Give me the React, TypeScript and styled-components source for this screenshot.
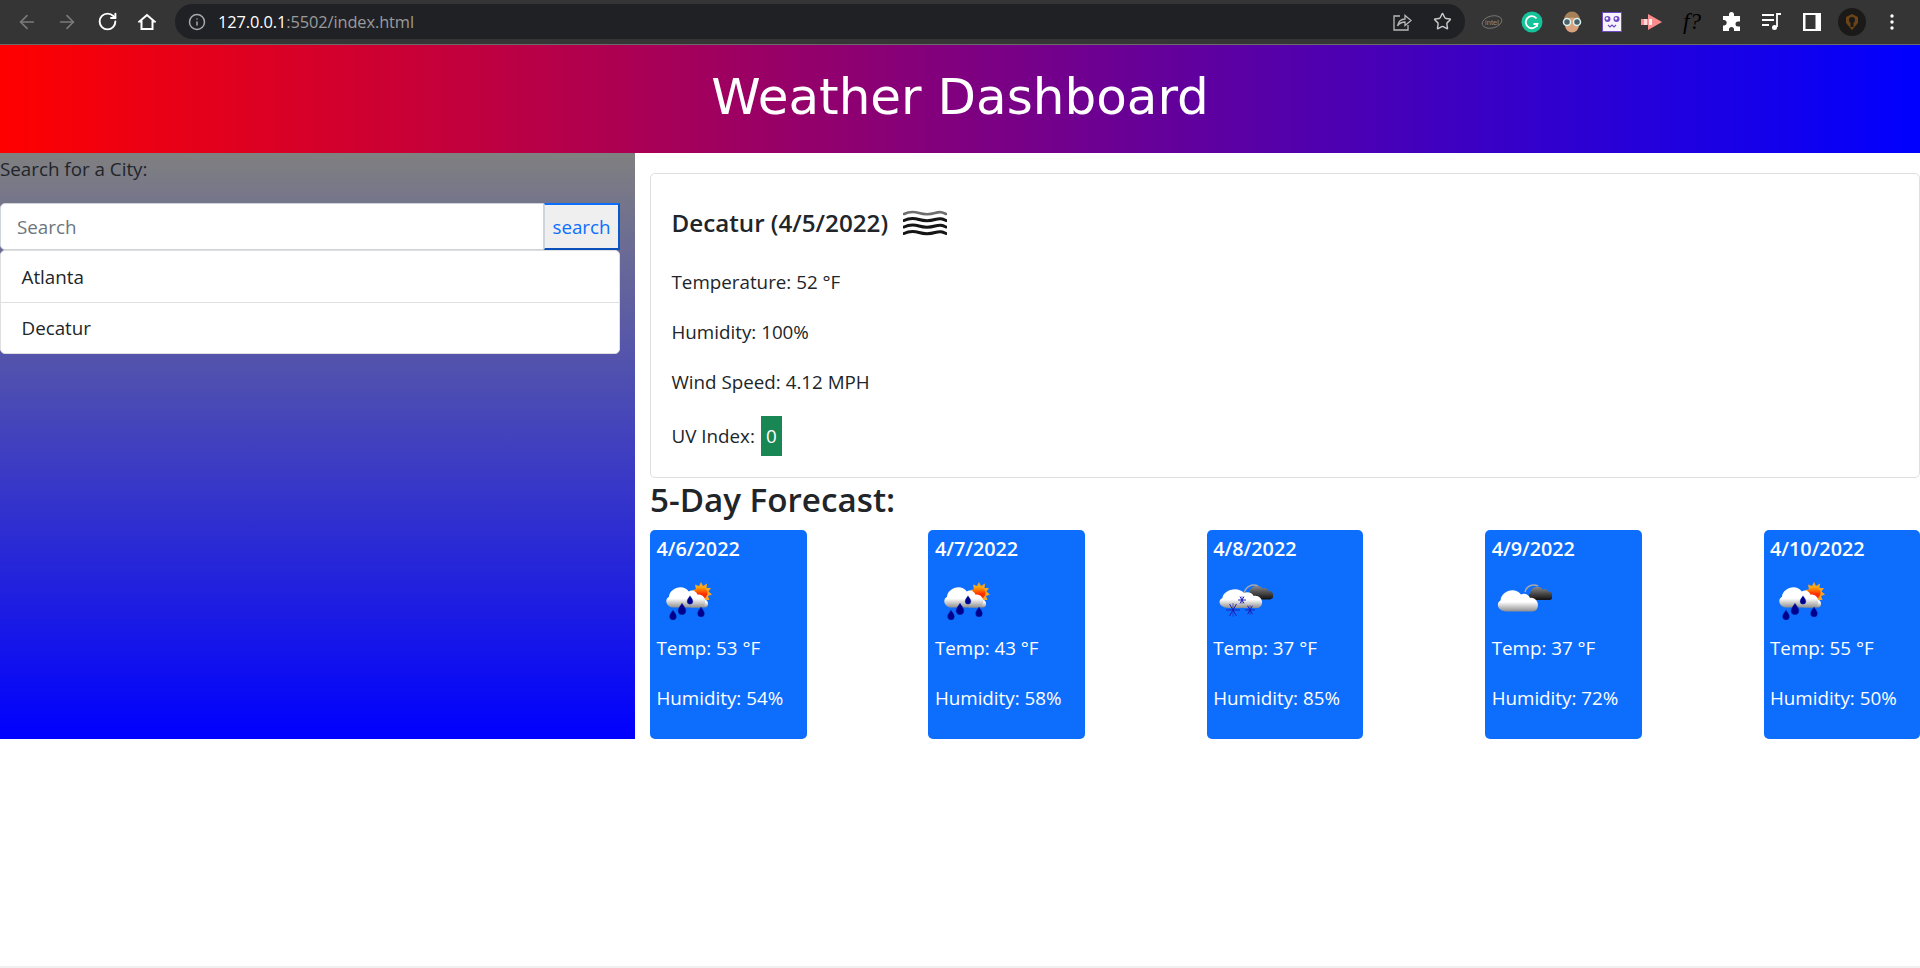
import React from 'react';
import styled, { createGlobalStyle } from 'styled-components';
import { ArrowLeft, ArrowRight, RotateCw, Info, Star } from 'lucide-react';

const GlobalStyle = createGlobalStyle`
  html, body {
    margin: 0;
    padding: 0;
    background: #fff;
  }
  * {
    box-sizing: border-box;
  }
`;

const Page = styled.div`
  height: 968px;
  display: flex;
  flex-direction: column;
  overflow: hidden;
  font-family: 'Open Sans', 'Noto Sans', sans-serif;
  font-size: 18.8px;
  color: #212529;
`;

const Toolbar = styled.div`
  height: 45px;
  flex: none;
  display: flex;
  align-items: center;
  padding: 0 0 1px 7px;
  background: #353535;
  border-bottom: 1px solid #6a6a6a;
`;

const Slot = styled.div`
  width: 40px;
  height: 32px;
  flex: none;
  display: flex;
  align-items: center;
  justify-content: center;
  color: ${(p: { $dim?: boolean }) => (p.$dim ? '#7b7b7b' : '#fff')};
`;

const Omnibox = styled.div`
  width: 1290px;
  height: 35px;
  margin: 0 7px 0 8px;
  padding: 0 3px 0 13px;
  display: flex;
  align-items: center;
  flex: none;
  border-radius: 18px;
  background: #202124;
  color: #a8a9ab;
`;

const Url = styled.div`
  flex: 1;
  margin-left: 12px;
  font-family: 'Open Sans', sans-serif;
  font-size: 16.4px;
  letter-spacing: -0.1px;
  color: #9a9b9e;

  b {
    font-weight: 400;
    color: #fff;
  }
`;

const FQuery = styled.span`
  font-family: 'Liberation Serif', serif;
  font-style: italic;
  font-size: 23px;
  color: #000;
`;

const Banner = styled.header`
  height: 108px;
  flex: none;
  padding-bottom: 5px;
  display: flex;
  align-items: center;
  justify-content: center;
  background: linear-gradient(to right, #f00, #00f);
`;

const BannerTitle = styled.h1`
  margin: 0;
  font-family: 'DejaVu Sans', Verdana, sans-serif;
  font-size: 50px;
  font-weight: 400;
  color: #fff;
`;

const Main = styled.main`
  display: flex;
  flex: none;
`;

const Sidebar = styled.aside`
  width: 635px;
  flex: none;
  background: linear-gradient(#808080, #00f);
`;

const SearchLabel = styled.p`
  margin: 1px 0 19px;
  line-height: 30px;
`;

const SearchGroup = styled.div`
  width: 620px;
  height: 47px;
  display: flex;
`;

const SearchInput = styled.div`
  flex: 1;
  padding-left: 16px;
  display: flex;
  align-items: center;
  background: #fff;
  color: #6c757d;
  border: 1px solid #ced4da;
  border-radius: 5px 0 0 5px;
`;

const SearchButton = styled.div`
  width: 76px;
  display: flex;
  align-items: center;
  justify-content: center;
  background: #efefef;
  color: #0d6efd;
  border: 2px solid #0d6efd;
  border-left: 1px solid #ced4da;
  border-bottom-color: #0b4fb8;
  border-right-color: #0b58ca;
`;

const CityList = styled.ul`
  width: 620px;
  margin: 0;
  padding: 0;
  list-style: none;
  background: #fff;
  border: 1px solid #dfdfdf;
  border-radius: 5px;
`;

const CityRow = styled.li`
  height: 51px;
  padding-left: 20.5px;
  display: flex;
  align-items: center;

  & + & {
    border-top: 1px solid #dfdfdf;
  }
`;

const Content = styled.section`
  flex: 1;
  padding: 20px 0 0 15px;
`;

const CurrentCard = styled.div`
  padding: 20px 20px 21px 20.5px;
  background: #fff;
  border: 1px solid #dfdfdf;
  border-radius: 5px;
`;

const CityTitle = styled.h5`
  height: 57px;
  margin: 0 0 16px;
  display: flex;
  align-items: center;
  gap: 15px;
  font-size: 24.2px;
  font-weight: 600;
`;

const Stat = styled.p`
  margin: 0 0 20px;
  line-height: 30px;
`;

const UvRow = styled.div`
  height: 40px;
  margin-top: -1px;
  display: flex;
  align-items: center;
  gap: 6px;
`;

const UvBadge = styled.span`
  width: 21px;
  height: 40px;
  display: flex;
  align-items: center;
  justify-content: center;
  background: #198754;
  color: #fff;
`;

const ForecastHeading = styled.h3`
  margin: 1px 0 9px;
  line-height: 42px;
  font-size: 33.2px;
  font-weight: 600;
`;

const ForecastRow = styled.div`
  display: flex;
  justify-content: space-between;
`;

const DayCard = styled.div`
  width: 156.5px;
  padding: 5px 6.5px 6px;
  border-radius: 5px;
  background: #0d6efd;
  color: #fff;
`;

const DayDate = styled.div`
  line-height: 28px;
  font-size: 19.8px;
  font-weight: 600;
`;

const DayIcon = styled.svg`
  display: block;
  width: 60px;
  height: 60px;
  margin: 2px 0 8px;
`;

const BottomEdge = styled.div`
  height: 2px;
  margin-top: auto;
  background: #f0f0f0;
`;

const CLOUD =
  'M10 20C3 20 0 13 5 10C5 3 17 -3 23 5C26 3 30 5 31 8C35 7 38 11 38 14C38 18 36 20 33 20Z';

const Defs = () => (
  <defs>
    <linearGradient id="cloudWhite" x1="0" y1="0" x2="0" y2="1">
      <stop offset="0.55" stopColor="#fff" />
      <stop offset="1" stopColor="#8f8f8f" />
    </linearGradient>
    <linearGradient id="cloudDark" x1="0" y1="0" x2="0" y2="1">
      <stop offset="0" stopColor="#8a8a8a" />
      <stop offset="0.5" stopColor="#4c4c4c" />
      <stop offset="1" stopColor="#111" />
    </linearGradient>
    <linearGradient id="sunCore" x1="0" y1="0" x2="0" y2="1">
      <stop offset="0" stopColor="#ffb300" />
      <stop offset="0.6" stopColor="#ff2a00" />
    </linearGradient>
    <filter id="soft" x="-10%" y="-10%" width="120%" height="120%">
      <feGaussianBlur stdDeviation="0.35" />
    </filter>
  </defs>
);

const Drop = ({ x, y, s = 1 }: { x: number; y: number; s?: number }) => (
  <path
    transform={`translate(${x} ${y}) scale(${s})`}
    d="M0 -5C1 -3 3.4 -1 3.4 1.5A3.4 3.4 0 0 1 -3.4 1.5C-3.4 -1 -1 -3 0 -5Z"
    fill="#00008f"
    stroke="#0a2f9f"
    strokeWidth="0.4"
  />
);

const Flake = ({ x, y, r }: { x: number; y: number; r: number }) => (
  <g transform={`translate(${x} ${y})`} stroke="#1c1fb4" strokeWidth="1" strokeLinecap="round">
    <line x1={-r} y1="0" x2={r} y2="0" />
    <line x1={-r * 0.5} y1={-r * 0.87} x2={r * 0.5} y2={r * 0.87} />
    <line x1={-r * 0.5} y1={r * 0.87} x2={r * 0.5} y2={-r * 0.87} />
    <line x1="0" y1={-r} x2="0" y2={r} strokeWidth="0.6" />
  </g>
);

const RainSunIcon = () => (
  <DayIcon viewBox="0 0 60 60">
    <Defs />
    <g filter="url(#soft)">
      <path
        d="M44 17L46 21L50 18.500L49.500 23L54 23L51.500 26.500L55 29.500L51 31L52.500 35L43 35L35 30L35.500 25L39 24.500L38 19.500L42 21Z"
        fill="#f5a623"
      />
      <circle cx="44" cy="28" r="6.500" fill="url(#sunCore)" />
      <path transform="translate(29 30) scale(0.58 0.62)" d={CLOUD} fill="url(#cloudWhite)" />
      <path transform="translate(6.500 21) scale(1.1 1.08)" d={CLOUD} fill="url(#cloudWhite)" />
      <Drop x={33} y={35} s={0.85} />
      <Drop x={25} y={44} s={1.15} />
      <Drop x={16} y={50} />
      <Drop x={44} y={47} s={1} />
    </g>
  </DayIcon>
);

const SnowIcon = () => (
  <DayIcon viewBox="0 0 60 60">
    <Defs />
    <g filter="url(#soft)">
      <path d="M31 29A10 10 0 0 1 45 21" fill="none" stroke="#a8a8a8" strokeWidth="1.500" />
      <path transform="translate(33 20) scale(0.72 0.72)" d={CLOUD} fill="url(#cloudDark)" />
      <path transform="translate(3.500 23) scale(1.2 1)" d={CLOUD} fill="url(#cloudWhite)" />
      <Flake x={29} y={35} r={3.500} />
      <Flake x={20} y={45} r={6.500} />
      <Flake x={37} y={45} r={4.500} />
    </g>
  </DayIcon>
);

const CloudsIcon = () => (
  <DayIcon viewBox="0 0 60 60">
    <Defs />
    <g filter="url(#soft)">
      <path d="M33 27A9 9 0 0 1 46 21" fill="none" stroke="#a8a8a8" strokeWidth="1.500" />
      <path transform="translate(35 21) scale(0.68 0.7)" d={CLOUD} fill="url(#cloudDark)" />
      <path transform="translate(3 24) scale(1.13 1.12)" d={CLOUD} fill="url(#cloudWhite)" />
    </g>
  </DayIcon>
);

const MistIcon = () => (
  <svg width="44" height="26" viewBox="0 0 44 26" fill="none" strokeLinecap="round">
    {[3, 9.500, 16, 22.500].map((y, i) => (
      <path
        key={y}
        d={`M1 ${y + 1}C6 ${y - 1.5} 11 ${y - 1.5} 16 ${y}S27 ${y + 1.5} 32 ${y}S39 ${y - 1} 43 ${y + 1}`}
        stroke={i === 0 ? '#6e6e6e' : '#141414'}
        strokeWidth={i === 0 ? 2.600 : 3}
      />
    ))}
  </svg>
);

const HomeIcon = () => (
  <svg width="18" height="18" viewBox="0 0 18 18" fill="none" stroke="#fff" strokeWidth="2" strokeLinejoin="miter">
    <path d="M9 2L1.500 8.500H3.500V16H14.500V8.500H16.500Z" />
  </svg>
);

const ShareIcon = () => (
  <svg width="20" height="20" viewBox="0 0 20 20" fill="none" stroke="#b8b8b8" strokeWidth="1.300">
    <path d="M8 4H2V18H16V13" />
    <path d="M5.500 14C6.500 9 9.500 7 13 7V3.500L19 8.500L13 13.500V10C10 10 7.500 11 5.500 14Z" />
  </svg>
);

const IntelLogo = () => (
  <svg width="22" height="16" viewBox="0 0 22 16" fill="none">
    <ellipse cx="11" cy="8" rx="10" ry="6" transform="rotate(-14 11 8)" stroke="#808080" strokeWidth="0.8" />
    <text x="11" y="10.500" textAnchor="middle" fontSize="7.500" fontFamily="Liberation Sans, sans-serif" fill="#8a8a8a">
      intel
    </text>
  </svg>
);

const GrammarlyLogo = () => (
  <svg width="22" height="22" viewBox="0 0 22 22" fill="none">
    <circle cx="11" cy="11" r="10.500" fill="#15c39a" />
    <path d="M15.500 7.500A6 6 0 1 0 16.500 13H12.500" stroke="#fff" strokeWidth="1.800" />
    <path d="M16 12.500V16" stroke="#fff" strokeWidth="1.500" />
  </svg>
);

const GlassesAvatar = () => (
  <svg width="20" height="22" viewBox="0 0 20 22">
    <ellipse cx="10" cy="9" rx="8" ry="8.500" fill="#a68058" />
    <ellipse cx="10" cy="14" rx="7" ry="7.500" fill="#d9a27c" />
    <circle cx="5" cy="11" r="3.500" fill="#4b5f66" stroke="#d8f2f4" strokeWidth="1.500" />
    <circle cx="15" cy="11" r="3.500" fill="#4b5f66" stroke="#d8f2f4" strokeWidth="1.500" />
  </svg>
);

const FaceLogo = () => (
  <svg width="20" height="20" viewBox="0 0 20 20">
    <rect x="0.500" y="0.500" width="19" height="19" fill="#f7f3fb" stroke="#6f4bc4" />
    <circle cx="5.500" cy="7" r="3" fill="#6f4bc4" />
    <circle cx="14.500" cy="7" r="3" fill="#6f4bc4" />
    <circle cx="5" cy="6.500" r="1.200" fill="#fff" />
    <circle cx="14" cy="6.500" r="1.200" fill="#fff" />
    <path d="M6 13L8 15L10 13L12 15L14 13" fill="none" stroke="#6f4bc4" strokeWidth="1.200" />
  </svg>
);

const ArrowTag = () => (
  <svg width="22" height="16" viewBox="0 0 22 16">
    <path d="M0 5H7V0L21 8L7 16V11H0Z" fill="#ff8d8d" />
    <rect x="3" y="5" width="3" height="6" fill="#ffd9d9" />
    <rect x="8" y="5" width="3" height="6" fill="#fff0f0" />
  </svg>
);

const PuzzleIcon = () => (
  <svg width="20" height="20" viewBox="0 0 20 20" fill="#fff">
    <path d="M7 2.500A2.500 2.500 0 0 1 12 2.500V4H18V9.500H16A2.500 2.500 0 0 0 16 14.500H18V19H12V17.500A2.500 2.500 0 0 0 7 17.500V19H1V13.500H2.500A2.800 2.800 0 0 0 2.500 8H1V4H7Z" />
  </svg>
);

const QueueIcon = () => (
  <svg width="20" height="18" viewBox="0 0 20 18" fill="none" stroke="#fff" strokeWidth="1.800">
    <path d="M0 2H12M0 7H12M0 12H7" />
    <path d="M15 14V1H19" />
    <circle cx="12.500" cy="14.500" r="2.500" fill="#fff" stroke="none" />
  </svg>
);

const SidePanelIcon = () => (
  <svg width="18" height="18" viewBox="0 0 18 18">
    <path d="M0 0H18V18H0ZM2.500 2V16H12.500V2Z" fill="#fff" fillRule="evenodd" />
  </svg>
);

const ProfileAvatar = () => (
  <svg width="28" height="28" viewBox="0 0 28 28">
    <circle cx="14" cy="14" r="14" fill="#1b1a18" />
    <path d="M14 6L20 9V15L14 22L8 15V9Z" fill="#6a4317" />
    <circle cx="14" cy="12" r="3" fill="#1b1a18" />
    <rect x="12.500" y="14" width="3" height="5" fill="#1b1a18" />
  </svg>
);

const MenuDots = () => (
  <svg width="4" height="16" viewBox="0 0 4 16" fill="#fff">
    <circle cx="2" cy="2" r="1.700" />
    <circle cx="2" cy="8" r="1.700" />
    <circle cx="2" cy="14" r="1.700" />
  </svg>
);

const forecast = [
  { date: '4/6/2022', temp: 53, humidity: 54, icon: <RainSunIcon /> },
  { date: '4/7/2022', temp: 43, humidity: 58, icon: <RainSunIcon /> },
  { date: '4/8/2022', temp: 37, humidity: 85, icon: <SnowIcon /> },
  { date: '4/9/2022', temp: 37, humidity: 72, icon: <CloudsIcon /> },
  { date: '4/10/2022', temp: 55, humidity: 50, icon: <RainSunIcon /> },
];

const App: React.FC = () => {
  return (
    <Page>
      <GlobalStyle />
      <Toolbar>
        <Slot $dim><ArrowLeft size={22} strokeWidth={1.8} /></Slot>
        <Slot $dim><ArrowRight size={22} strokeWidth={1.8} /></Slot>
        <Slot><RotateCw size={21} strokeWidth={2.200} /></Slot>
        <Slot><HomeIcon /></Slot>
        <Omnibox>
          <Info size={18} strokeWidth={2} />
          <Url><b>127.0.0.1</b>:5502/index.html</Url>
          <Slot><ShareIcon /></Slot>
          <Slot><Star size={19} color="#c8c8c8" strokeWidth={1.8} /></Slot>
        </Omnibox>
        <Slot><IntelLogo /></Slot>
        <Slot><GrammarlyLogo /></Slot>
        <Slot><GlassesAvatar /></Slot>
        <Slot><FaceLogo /></Slot>
        <Slot><ArrowTag /></Slot>
        <Slot><FQuery>f?</FQuery></Slot>
        <Slot><PuzzleIcon /></Slot>
        <Slot><QueueIcon /></Slot>
        <Slot><SidePanelIcon /></Slot>
        <Slot><ProfileAvatar /></Slot>
        <Slot><MenuDots /></Slot>
      </Toolbar>

      <Banner>
        <BannerTitle>Weather Dashboard</BannerTitle>
      </Banner>

      <Main>
        <Sidebar>
          <SearchLabel>Search for a City:</SearchLabel>
          <SearchGroup>
            <SearchInput>Search</SearchInput>
            <SearchButton>search</SearchButton>
          </SearchGroup>
          <CityList>
            <CityRow>Atlanta</CityRow>
            <CityRow>Decatur</CityRow>
          </CityList>
        </Sidebar>

        <Content>
          <CurrentCard>
            <CityTitle>
              Decatur (4/5/2022)
              <MistIcon />
            </CityTitle>
            <Stat>Temperature: 52 °F</Stat>
            <Stat>Humidity: 100%</Stat>
            <Stat>Wind Speed: 4.12 MPH</Stat>
            <UvRow>
              UV Index: <UvBadge>0</UvBadge>
            </UvRow>
          </CurrentCard>

          <ForecastHeading>5-Day Forecast:</ForecastHeading>
          <ForecastRow>
            {forecast.map((day) => (
              <DayCard key={day.date}>
                <DayDate>{day.date}</DayDate>
                {day.icon}
                <Stat>Temp: {day.temp} °F</Stat>
                <Stat>Humidity: {day.humidity}%</Stat>
              </DayCard>
            ))}
          </ForecastRow>
        </Content>
      </Main>

      <BottomEdge />
    </Page>
  );
};

export default App;
